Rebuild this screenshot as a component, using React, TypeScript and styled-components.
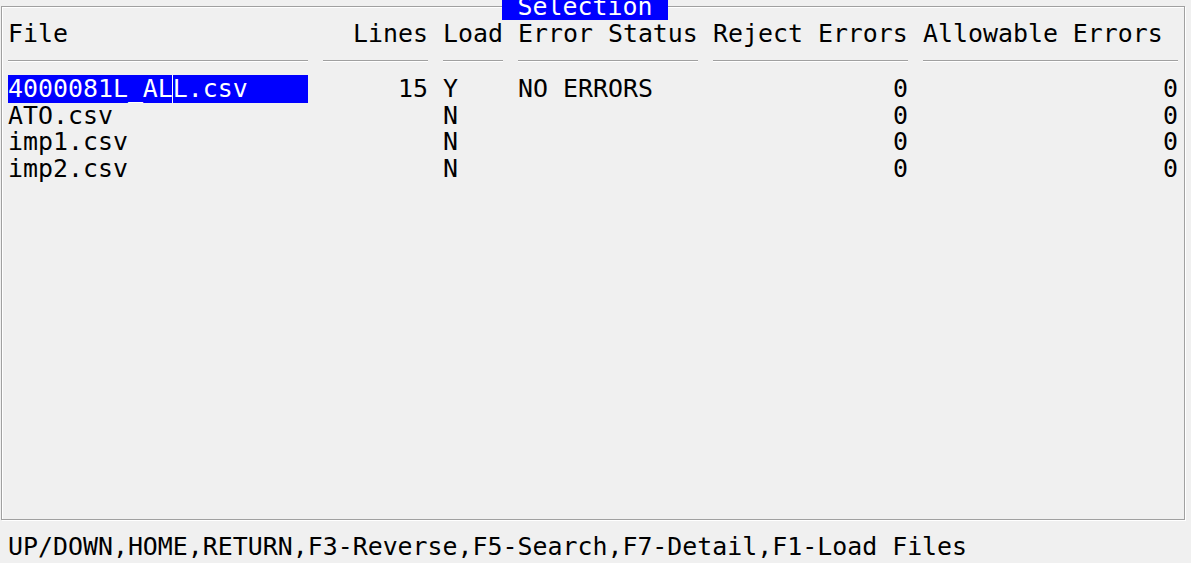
import React from 'react'
import styled, { createGlobalStyle, css } from 'styled-components'

const GlobalStyle = createGlobalStyle`
  html, body {
    margin: 0;
    padding: 0;
    background: #f0f0f0;
  }
  body {
    color: #000;
    font-family: "DejaVu Sans Mono", "Liberation Mono", monospace;
    font-size: 24.9px;
  }
`

const ROW = '26.67px'

const Screen = styled.div`
  box-sizing: border-box;
  height: 563px;
  overflow: hidden;
  padding-top: 6px;
  width: 1191px;
`

const Window = styled.section`
  border: 1px solid #a0a0a0;
  box-shadow: inset 1px 1px 0 #fff, 1px 1px 0 #fff;
  box-sizing: border-box;
  height: 514px;
  margin-left: 1px;
  padding: 13px 0 0 6px;
  position: relative;
  width: 1184px;
`

// window caption sits across the top border, half of it off screen
const Title = styled.h1`
  background: #0000ff;
  box-sizing: border-box;
  color: #fff;
  font: inherit;
  height: ${ROW};
  left: 500px;
  line-height: ${ROW};
  margin: 0;
  padding-top: 1px;
  position: absolute;
  text-align: center;
  top: -13.67px;
  white-space: pre;
  width: 166px;
`

const columns = css`
  column-gap: 15px;
  display: grid;
  grid-template-columns: 300px 105px 60px 180px 195px 255px;
`

const HeaderRow = styled.div`
  ${columns}
  margin-bottom: 14.33px;
`

const HeadCell = styled.div<{ $right?: boolean }>`
  border-bottom: 1px solid #a0a0a0;
  box-shadow: 0 1px 0 #fff;
  line-height: ${ROW};
  padding: 1px 0 12px;
  text-align: ${p => (p.$right ? 'right' : 'left')};
  white-space: pre;
`

const Row = styled.div`
  ${columns}
  height: ${ROW};
`

const Cell = styled.div<{ $right?: boolean }>`
  line-height: ${ROW};
  padding-top: 1px;
  text-align: ${p => (p.$right ? 'right' : 'left')};
  white-space: pre;
`

const FileCell = styled.div<{ $selected?: boolean }>`
  background: ${p => (p.$selected ? '#0000ff' : 'transparent')};
  color: ${p => (p.$selected ? '#fff' : '#000')};
  display: flex;
  line-height: ${ROW};
  white-space: pre;
`

const Name = styled.span`
  padding-top: 1px;
`

const AfterCursor = styled(Name)`
  box-shadow: -1px 0 0 #fff;
`

const Status = styled.div`
  line-height: ${ROW};
  margin-top: 14px;
  padding-left: 8px;
  white-space: pre;
`

interface FileRow {
  name: string
  lines: string
  load: string
  status: string
  reject: string
  allowable: string
}

const files: FileRow[] = [
  { name: '4000081L_ALL.csv', lines: '15', load: 'Y', status: 'NO ERRORS', reject: '0', allowable: '0' },
  { name: 'ATO.csv', lines: '', load: 'N', status: '', reject: '0', allowable: '0' },
  { name: 'imp1.csv', lines: '', load: 'N', status: '', reject: '0', allowable: '0' },
  { name: 'imp2.csv', lines: '', load: 'N', status: '', reject: '0', allowable: '0' }
]

const selected = 0
const cursorAt = 11

export default function App() {
  return (
    <Screen>
      <GlobalStyle />
      <Window>
        <Title>Selection</Title>
        <HeaderRow>
          <HeadCell>File</HeadCell>
          <HeadCell $right>Lines</HeadCell>
          <HeadCell>Load</HeadCell>
          <HeadCell>Error Status</HeadCell>
          <HeadCell>Reject Errors</HeadCell>
          <HeadCell>Allowable Errors</HeadCell>
        </HeaderRow>
        {files.map((f, i) => (
          <Row key={f.name}>
            {i === selected ? (
              <FileCell $selected>
                <Name>{f.name.slice(0, cursorAt)}</Name>
                <AfterCursor>{f.name.slice(cursorAt)}</AfterCursor>
              </FileCell>
            ) : (
              <FileCell>
                <Name>{f.name}</Name>
              </FileCell>
            )}
            <Cell $right>{f.lines}</Cell>
            <Cell>{f.load}</Cell>
            <Cell>{f.status}</Cell>
            <Cell $right>{f.reject}</Cell>
            <Cell $right>{f.allowable}</Cell>
          </Row>
        ))}
      </Window>
      <Status>UP/DOWN,HOME,RETURN,F3-Reverse,F5-Search,F7-Detail,F1-Load Files</Status>
    </Screen>
  )
}
